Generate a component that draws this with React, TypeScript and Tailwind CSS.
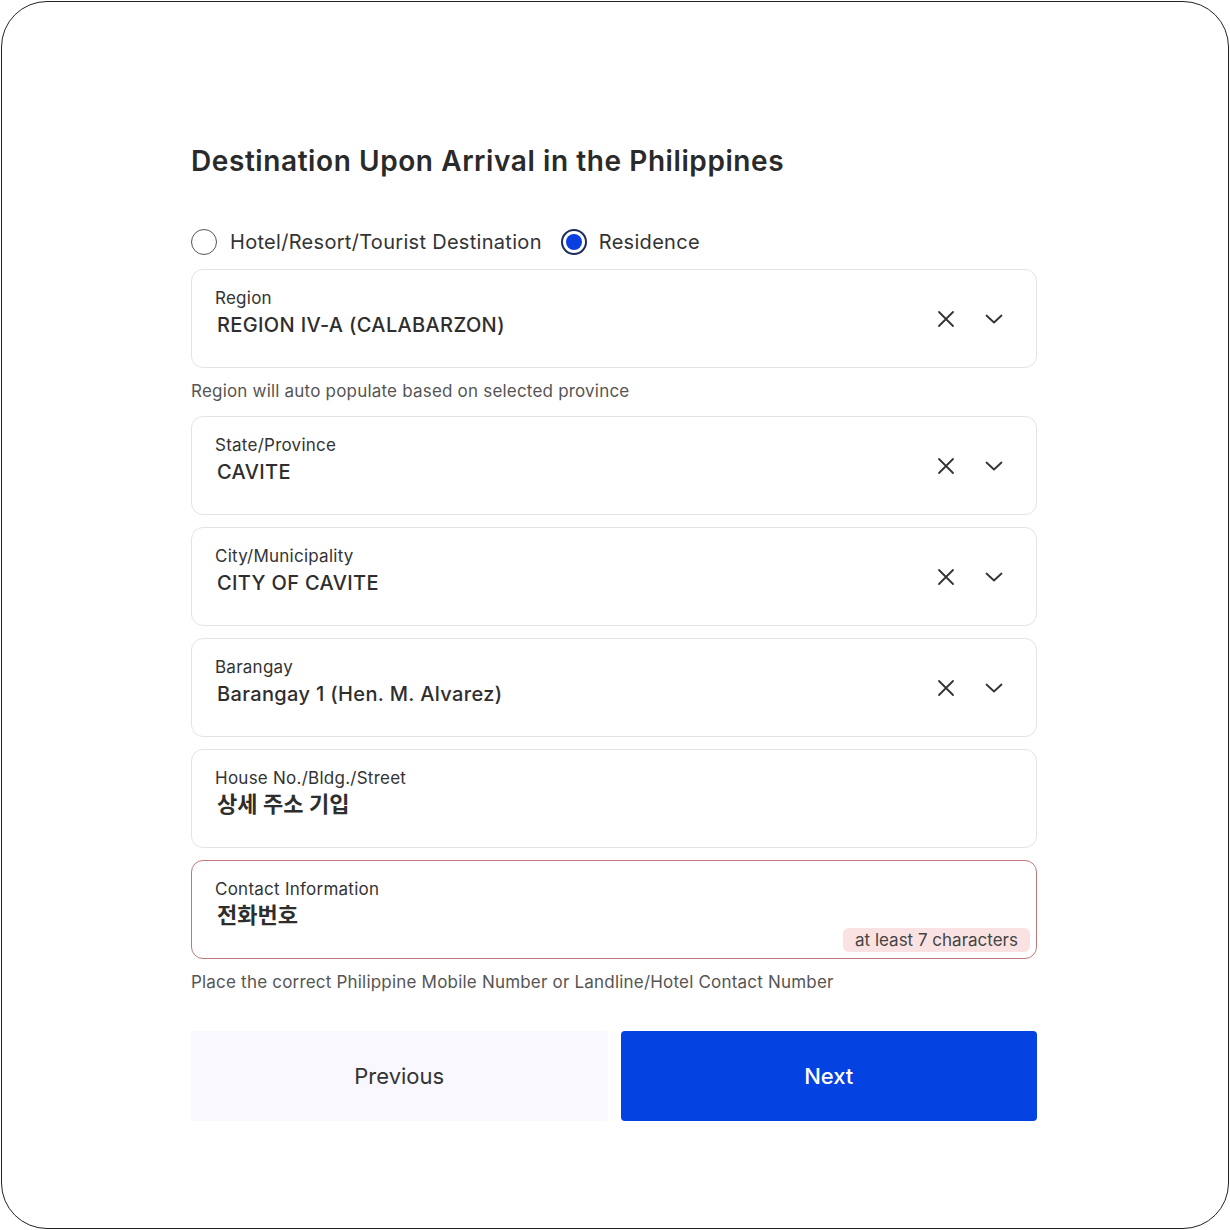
import React from "react";

const XIcon = () => (
  <svg width="18" height="18" viewBox="0 0 18 18" fill="none" stroke="#333" strokeWidth="1.8" strokeLinecap="round">
    <path d="M2 2 L16 16 M16 2 L2 16" />
  </svg>
);

const Chevron = () => (
  <svg width="18" height="10" viewBox="0 0 18 10" fill="none" stroke="#333" strokeWidth="1.8" strokeLinecap="round" strokeLinejoin="round">
    <path d="M1.5 1.5 L9 8.5 L16.5 1.5" />
  </svg>
);

type FieldProps = {
  label: string;
  value: string;
  icons?: boolean;
  error?: boolean;
  korean?: boolean;
};

const Field = ({ label, value, icons, error, korean }: FieldProps) => (
  <div
    className={
      "relative flex h-[99px] items-start rounded-[12px] border bg-white pl-[23px] pr-[33px] " +
      (error ? "border-[#c0777a]" : "border-[#e3e3e3]")
    }
  >
    <div className="flex flex-1 flex-col pt-[17px]">
      <div className="text-[17px] leading-[22px] tracking-[0.25px] text-[#333]">{label}</div>
      <div
        className={
          korean
            ? "mt-[2px] pl-[2px] text-[22px] font-semibold leading-[27px] text-[#2e2e2e]"
            : "mt-[3px] pl-[2px] text-[20px] font-medium leading-[26px] tracking-[0.35px] text-[#2e2e2e]"
        }
      >
        {value}
      </div>
    </div>
    {icons && (
      <div className="flex h-full items-center gap-[30px] pt-[1px]">
        <XIcon />
        <Chevron />
      </div>
    )}
    {error && (
      <div className="absolute bottom-[6px] right-[6px] rounded-[6px] bg-[#fbe2e2] px-[12px] text-[17px] leading-[24px] text-[#444]">
        at least 7 characters
      </div>
    )}
  </div>
);

export default function App() {
  return (
    <div
      className="h-[1230px] w-[1230px] bg-white p-[1px]"
      style={{ fontFamily: "Inter, 'Noto Sans CJK KR', sans-serif" }}
    >
      <div className="h-[1228px] w-[1228px] rounded-[46px] border-[1.5px] border-[#222] bg-white pl-[189px] pt-[141px]">
        <div className="w-[846px]">
          <h1 className="text-[28px] font-semibold leading-[36px] tracking-[0.58px] text-[#2a2a2a]">
            Destination Upon Arrival in the Philippines
          </h1>

          <div className="mt-[49px] flex h-[28px] items-center">
            <div className="h-[26px] w-[26px] rounded-full border-[1.5px] border-[#555]" />
            <span className="ml-[13px] text-[20px] leading-[26px] tracking-[0.3px] text-[#333]">
              Hotel/Resort/Tourist Destination
            </span>
            <div className="ml-[19px] flex h-[26px] w-[26px] items-center justify-center rounded-full border-2 border-[#1c2b5a]">
              <div className="h-[16px] w-[16px] rounded-full bg-[#0a3fe0]" />
            </div>
            <span className="ml-[12px] text-[20px] leading-[26px] tracking-[0.3px] text-[#333]">Residence</span>
          </div>

          <div className="mt-[13px]">
            <Field label="Region" value="REGION IV-A (CALABARZON)" icons />
          </div>
          <div className="mt-[12px] mb-[14px] text-[17px] leading-[22px] tracking-[0.2px] text-[#555]">
            Region will auto populate based on selected province
          </div>

          <div className="flex flex-col gap-[12px]">
            <Field label="State/Province" value="CAVITE" icons />
            <Field label="City/Municipality" value="CITY OF CAVITE" icons />
            <Field label="Barangay" value="Barangay 1 (Hen. M. Alvarez)" icons />
            <Field label="House No./Bldg./Street" value="상세 주소 기입" korean />
            <Field label="Contact Information" value="전화번호" korean error />
          </div>
          <div className="mt-[12px] text-[17px] leading-[22px] tracking-[0.2px] text-[#555]">
            Place the correct Philippine Mobile Number or Landline/Hotel Contact Number
          </div>

          <div className="mt-[38px] grid grid-cols-2 gap-[13px]">
            <button className="h-[90px] rounded-[4px] bg-[#f8f8fe] text-[22px] text-[#333]">Previous</button>
            <button className="h-[90px] rounded-[4px] bg-[#0442e1] text-[22px] font-medium text-white">Next</button>
          </div>
        </div>
      </div>
    </div>
  );
}
